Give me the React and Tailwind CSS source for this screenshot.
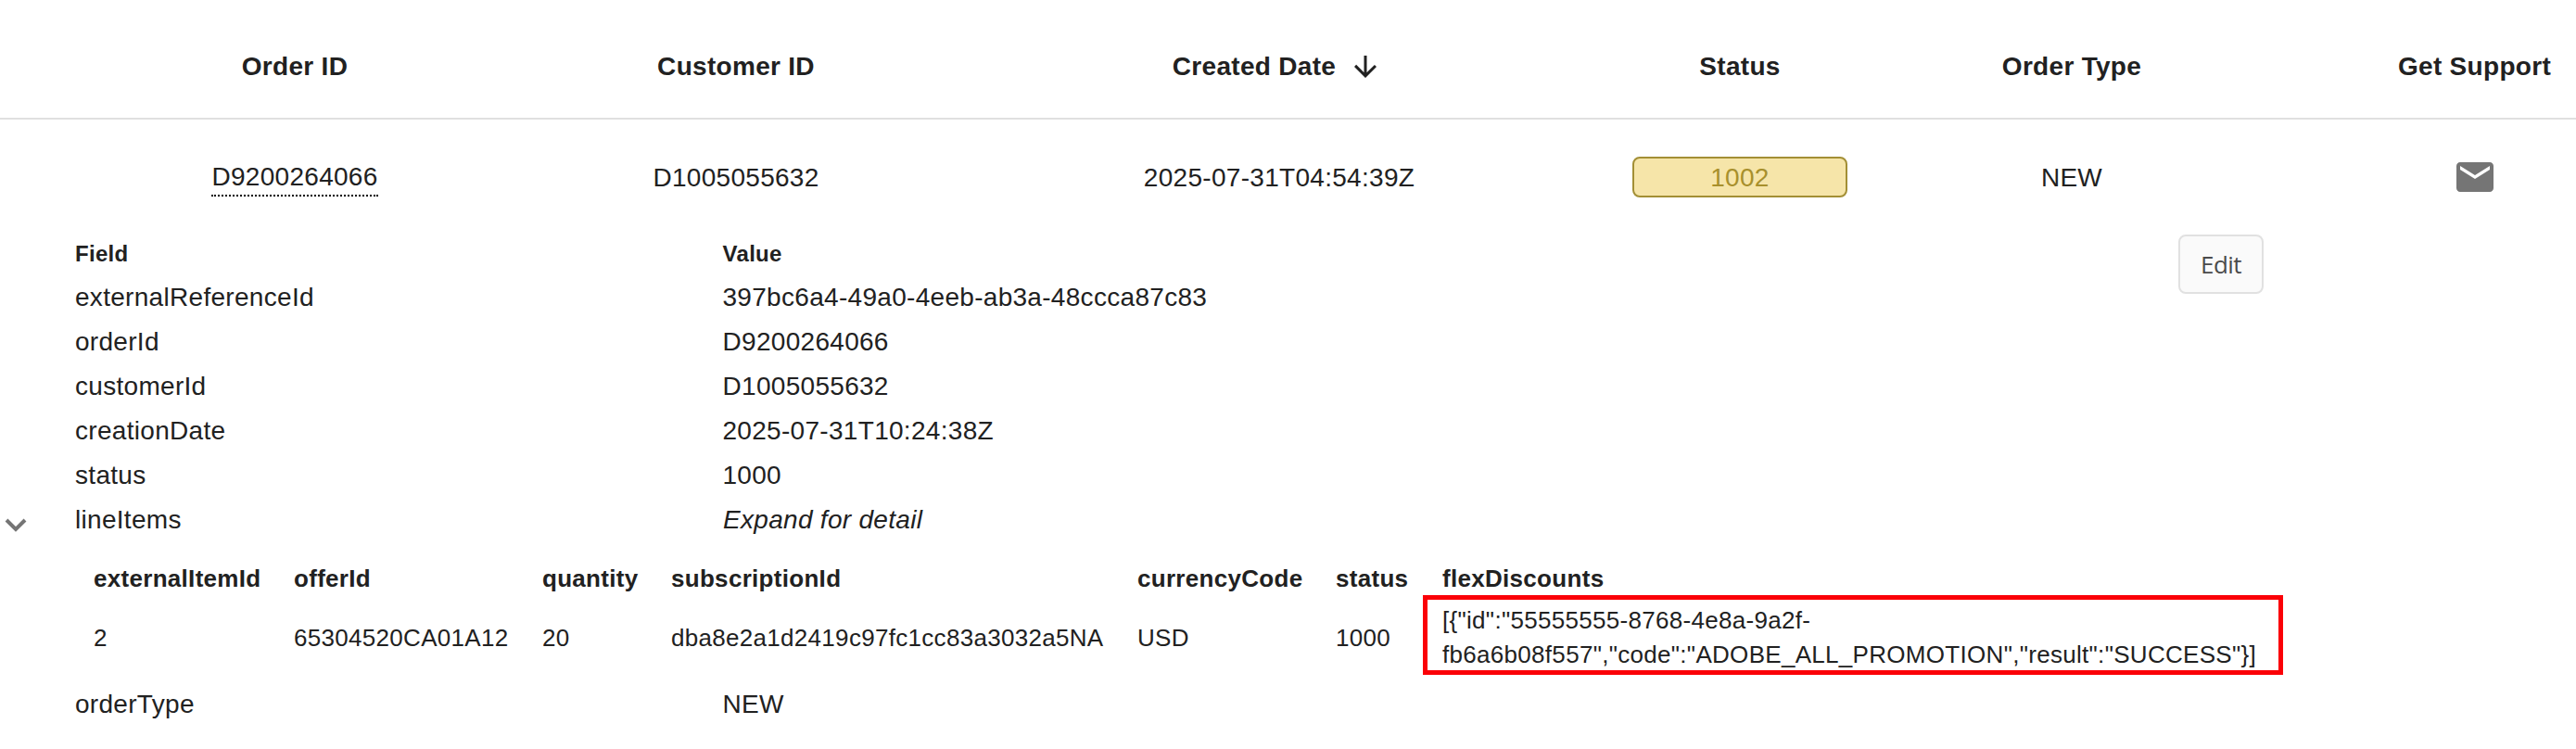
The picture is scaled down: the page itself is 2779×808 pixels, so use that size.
const orderCols = {
  orderId: 'w-[636px]',
  customerId: 'w-[316px]',
  created: 'w-[800px]',
  status: 'w-[250px]',
  orderType: 'w-[466px]',
  support: 'w-[403px]',
};

const fields = [
  ['externalReferenceId', '397bc6a4-49a0-4eeb-ab3a-48ccca87c83'],
  ['orderId', 'D9200264066'],
  ['customerId', 'D1005055632'],
  ['creationDate', '2025-07-31T10:24:38Z'],
  ['status', '1000'],
];

const items = [
  ['externalItemId', '2', 'w-[216px]'],
  ['offerId', '65304520CA01A12', 'w-[268px]'],
  ['quantity', '20', 'w-[139px]'],
  ['subscriptionId', 'dba8e2a1d2419c97fc1cc83a3032a5NA', 'w-[503px]'],
  ['currencyCode', 'USD', 'w-[214px]'],
  ['status', '1000', 'w-[94px]'],
];

function Cell({ width, children }) {
  return <div className={`${width} flex shrink-0 items-center justify-center`}>{children}</div>;
}

function FieldRow({ name, children }) {
  return (
    <div className="flex h-12 items-center pl-[81px]">
      <div className="w-[698.5px]">{name}</div>
      <div>{children}</div>
    </div>
  );
}

export default function App() {
  return (
    <div className="h-[808px] w-[2779px] overflow-hidden whitespace-nowrap bg-white font-['Liberation_Sans',Arial,sans-serif] text-[28px] leading-[32px] tracking-[0.3px] text-[#212121]">
      <div className="flex h-[129px] items-center border-b-2 border-[#e0e0e0] pt-4 font-bold">
        <Cell width={orderCols.orderId}>Order ID</Cell>
        <Cell width={orderCols.customerId}>Customer ID</Cell>
        <Cell width={orderCols.created}>
          <span className="ml-[52px]">Created Date</span>
          <svg className="ml-3.5 h-9 w-9" viewBox="0 0 24 24" fill="currentColor">
            <path d="M20 12l-1.410-1.410L13 16.170V4h-2v12.170l-5.580-5.590L4 12l8 8 8-8z" />
          </svg>
        </Cell>
        <Cell width={orderCols.status}>Status</Cell>
        <Cell width={orderCols.orderType}>Order Type</Cell>
        <Cell width={orderCols.support}>Get Support</Cell>
      </div>

      <div className="flex h-[124px] items-center">
        <Cell width={orderCols.orderId}>
          <span className="mt-[5px] border-b-2 border-dotted border-black pb-[3px]">D9200264066</span>
        </Cell>
        <Cell width={orderCols.customerId}><span className="pt-0.5">D1005055632</span></Cell>
        <Cell width={orderCols.created}><span className="pl-14 pt-0.5">2025-07-31T04:54:39Z</span></Cell>
        <Cell width={orderCols.status}>
          <div className="flex h-11 w-[232px] shrink-0 items-center justify-center rounded-lg border-2 border-[#a38f35] bg-[#f6e5a9] pt-0.5 text-[#a8902c]">1002</div>
        </Cell>
        <Cell width={orderCols.orderType}><span className="pt-0.5">NEW</span></Cell>
        <Cell width={orderCols.support}>
          <svg className="h-12 w-12 text-[#757575]" viewBox="0 0 24 24" fill="currentColor">
            <path d="M20 4H4c-1.100 0-1.990.9-1.990 2L2 18c0 1.100.9 2 2 2h16c1.100 0 2-.9 2-2V6c0-1.100-.9-2-2-2zm0 4l-8 5-8-5V6l8 5 8-5v2z" />
          </svg>
        </Cell>
      </div>

      <div className="flex h-11 items-start">
        <div className="w-[779.5px] pl-[81px] pt-[5px] text-[24px] font-bold">Field</div>
        <div className="w-[1570.5px] pt-[5px] text-[24px] font-bold">Value</div>
        <button className="flex h-16 w-[92px] items-center justify-center rounded-lg border-2 border-[#e1e1e1] bg-[#fafafa] font-['Open_Sans',sans-serif] text-[26px] tracking-[-0.6px] text-[#4b4b4b]">Edit</button>
      </div>

      {fields.map(([name, value]) => <FieldRow key={name} name={name}>{value}</FieldRow>)}

      <div className="flex h-12 items-center">
        <div className="w-[81px] pt-3">
          <svg className="ml-[5px] h-4 w-6 text-[#757575]" viewBox="0 0 24 16" fill="none" stroke="currentColor" strokeWidth="4">
            <path d="M2 2l10 10L22 2" />
          </svg>
        </div>
        <div className="w-[699px]">lineItems</div>
        <div className="italic">Expand for detail</div>
      </div>

      <div className="flex h-[143px] pl-[101px] text-[26px]">
        {items.map(([name, value, width]) => (
          <div key={name} className={`${width} shrink-0`}>
            <div className="h-[57px] pt-[23px] font-bold">{name}</div>
            <div className="pt-[30px]">{value}</div>
          </div>
        ))}
        <div className="w-[928px]">
          <div className="h-[57px] pl-[21px] pt-[23px] font-bold">flexDiscounts</div>
          <div className="h-[86px] border-[5px] border-[#fb0007] pl-4 pt-1 leading-[37px]">
            <div>{'[{"id":"55555555-8768-4e8a-9a2f-'}</div>
            <div>{'fb6a6b08f557","code":"ADOBE_ALL_PROMOTION","result":"SUCCESS"}]'}</div>
          </div>
        </div>
      </div>
      <div className="pt-2">
        <FieldRow name="orderType">NEW</FieldRow>
      </div>
    </div>
  );
}
